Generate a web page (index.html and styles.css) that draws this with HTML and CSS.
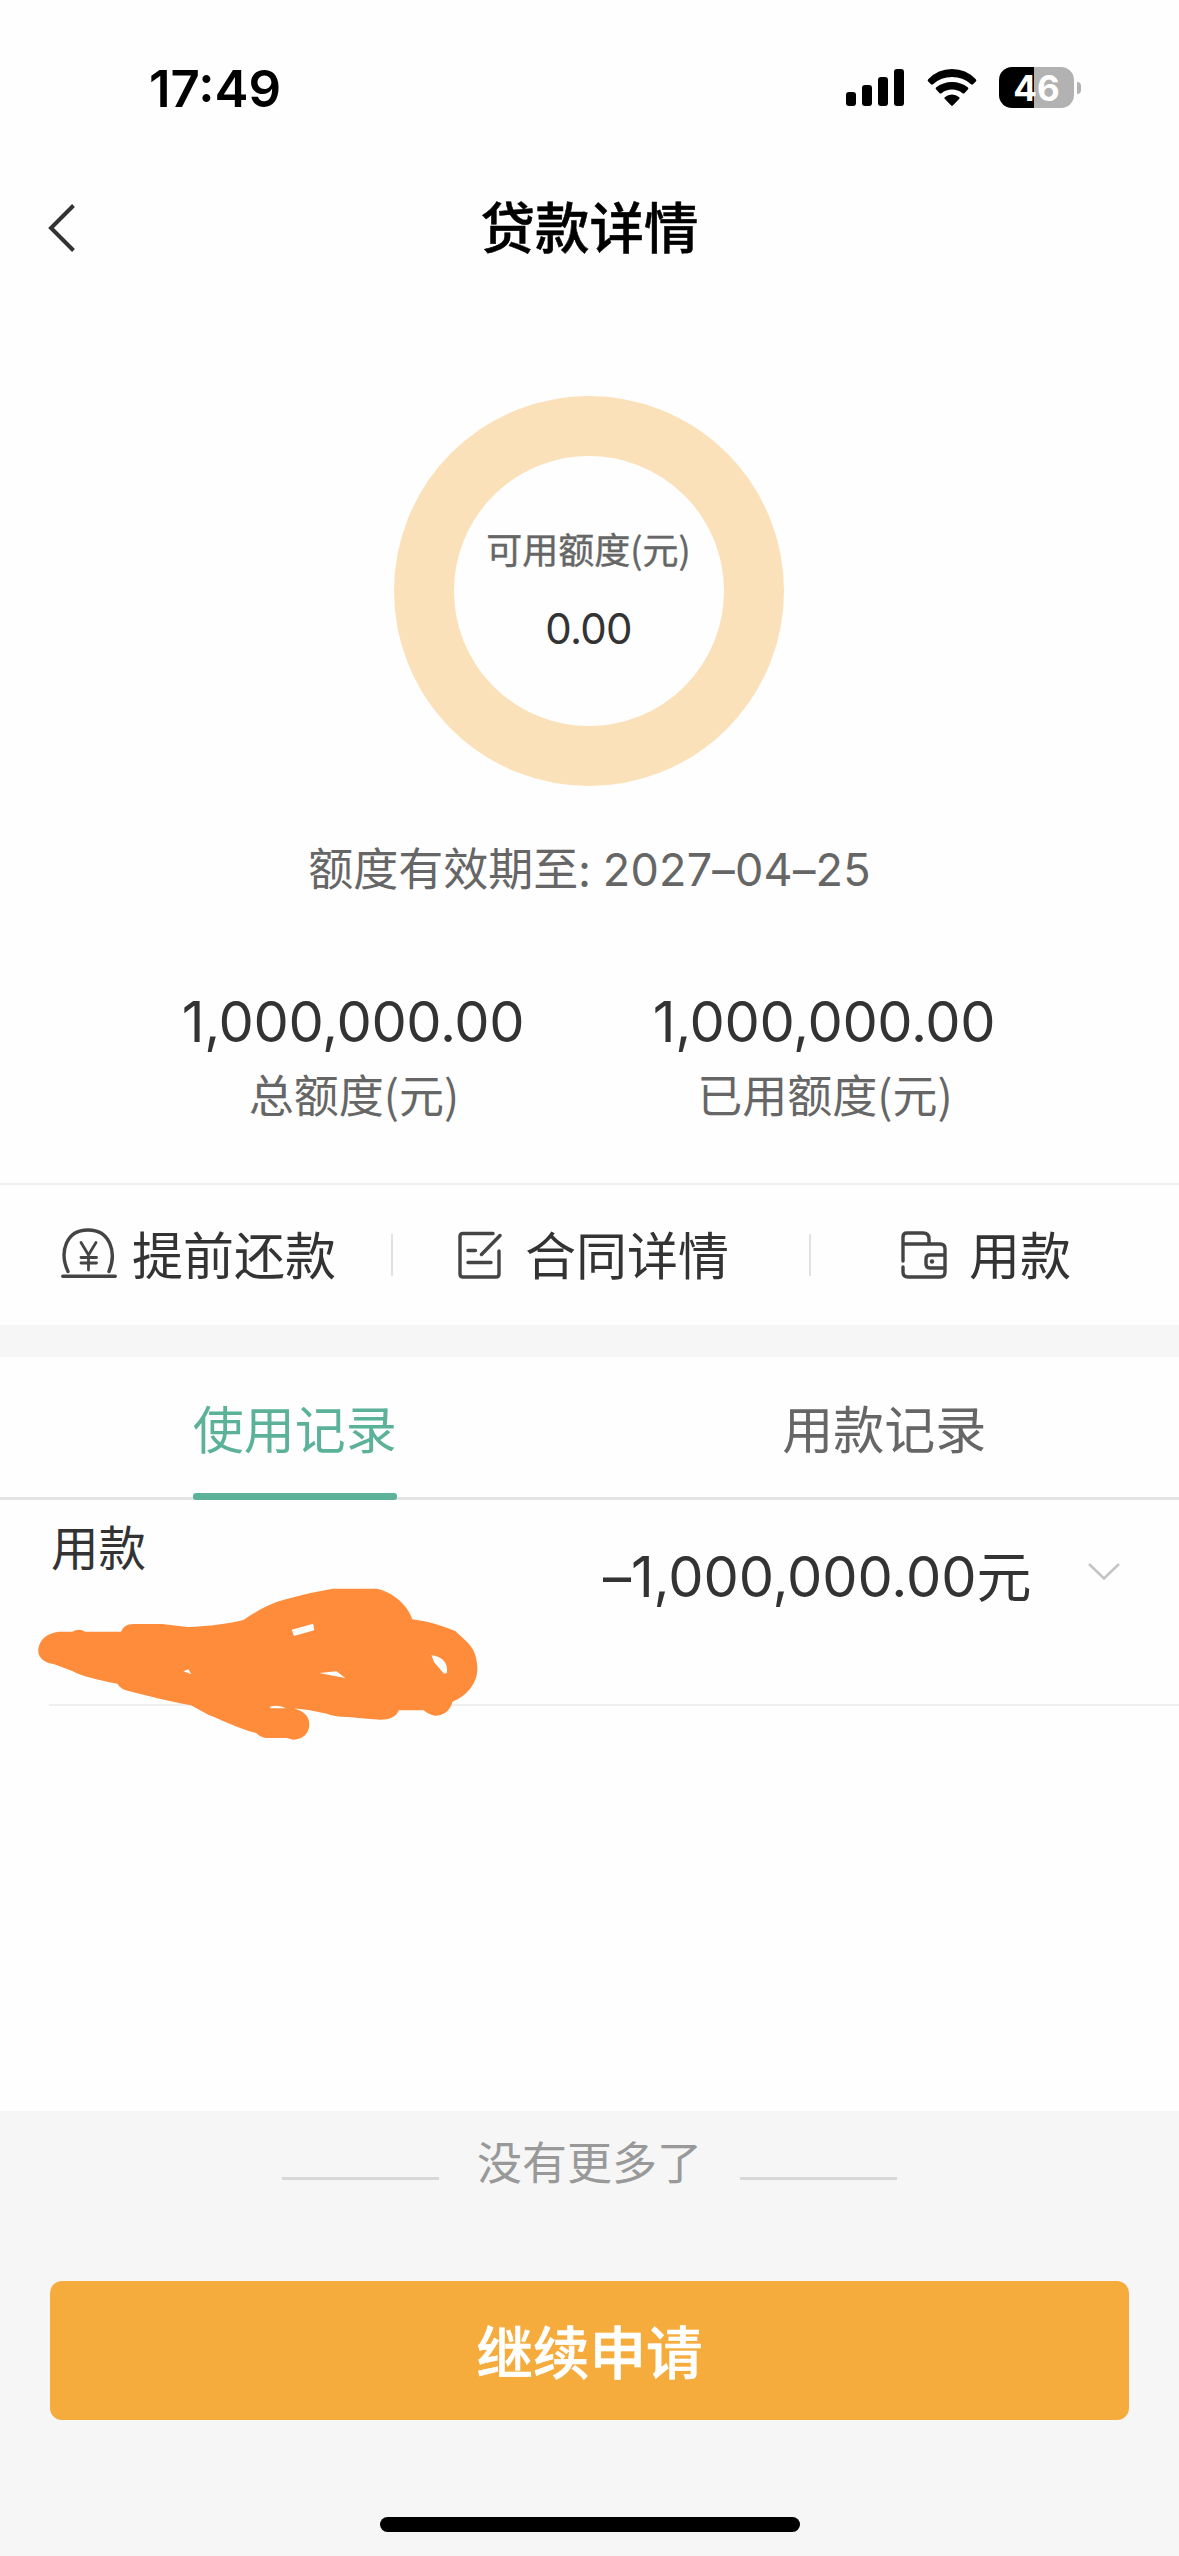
FILE: index.html
```html
<!DOCTYPE html>
<html lang="zh-CN">
<head>
<meta charset="utf-8">
<title>贷款详情</title>
<link rel="stylesheet" href="styles.css">
</head>
<body>
<main class="page">
  <header class="status">
    <span class="time">17:49</span>
    <div class="status-icons">
      <svg class="signal" width="58" height="38" viewBox="0 0 58 38"><rect y="23" width="10" height="14" rx="3"/><rect x="16" y="16" width="10" height="21" rx="3"/><rect x="32" y="8" width="10" height="29" rx="3"/><rect x="48" y="0" width="10" height="37" rx="3"/></svg>
      <svg class="wifi" width="50" height="38" viewBox="0 0 50 38"><path d="M1.2 10.2Q0 11.4 1.2 12.6L4 15.3Q5 16 6 15.2Q14 8 25 8T44 15.2Q45 16 46 15.3L48.800 12.600Q50 11.400 48.800 10.200Q39 0 25 0T1.200 10.200Z"/><path d="M9 18.500Q8.200 19.400 9 20.300L12.600 24.200Q13.500 25 14.500 24.200Q19 20.500 25 20.500T35.500 24.200Q36.500 25 37.400 24.200L41 20.300Q41.800 19.400 41 18.500Q34 13 25 13T9 18.500Z"/><path d="M17.700 28.200Q17 29.200 17.900 30.100L24.200 36.500Q25 37.300 25.800 36.500L32.100 30.100Q33 29.200 32.300 28.200Q29 25.500 25 25.500T17.700 28.200Z"/></svg>
      <div class="battery"><span class="battery-body">46</span><span class="battery-cap"></span></div>
    </div>
  </header>

  <nav class="nav">
    <svg class="back" width="28" height="48" viewBox="0 0 28 48"><path d="M25.500 1.500L3 24L25.500 46.500"/></svg>
    <h1 class="title">贷款详情</h1>
  </nav>

  <section class="summary">
    <div class="ring">
      <span class="ring-label">可用额度(元)</span>
      <span class="ring-value">0.00</span>
    </div>
    <p class="expiry">额度有效期至: <span class="date">2027–04–25</span></p>
    <div class="totals">
      <div class="total"><span class="amount">1,000,000.00</span><span class="label">总额度(元)</span></div>
      <div class="total"><span class="amount">1,000,000.00</span><span class="label">已用额度(元)</span></div>
    </div>
  </section>

  <section class="actions">
    <div class="action repay">
      <svg width="56" height="50" viewBox="0 0 56 50"><path d="M7 43.500C-2 24 5 2 27 2S56 24 48 43.500"/><path d="M1.800 48.300H54.200"/><path class="yen" d="M20 14.500L27.500 27L35 14.500M27.500 27V42M20 29.500H35.500M20 35H35.500"/></svg>
      <span>提前还款</span>
    </div>
    <div class="action contract">
      <svg width="44" height="48" viewBox="0 0 44 48"><path d="M35 2.500H5Q2 2.500 2 5.500V43Q2 46 5 46H38Q41 46 41 43V20M42 4.500L23.500 23.500M10 19.500H17.500M10 31.500H33"/></svg>
      <span>合同详情</span>
    </div>
    <div class="action withdraw">
      <svg width="46" height="50" viewBox="0 0 46 50"><path d="M2 31V7Q2 3 6 3H22Q28 3 28 9V14M2 14H39Q44 14 44 19V42Q44 47 39 47H7Q2 47 2 42V37M44 25H29Q25 25 25 29V34Q25 38 29 38H44"/><circle cx="31" cy="31.500" r="2.200"/></svg>
      <span>用款</span>
    </div>
  </section>

  <section class="records">
    <div class="tabs">
      <div class="tab active"><span>使用记录</span></div>
      <div class="tab"><span>用款记录</span></div>
    </div>
    <div class="record">
      <span class="record-name">用款</span>
      <span class="record-amount"><span class="num">–1,000,000.00</span>元</span>
      <svg class="expand" width="32" height="18" viewBox="0 0 32 18"><path d="M1 1L16 15.500L31 1"/></svg>
      <svg class="redaction" viewBox="90 640 1170 480" preserveAspectRatio="none"><path fill-rule="evenodd" d="M101 840C104 808 125 790 155 786H190Q207 774 224 786H317Q324 764 350 763H425L490 772C550 769 600 762 638 750C680 718 710 700 750 688Q810 668 870 657H985C1030 668 1068 710 1078 749C1120 755 1160 770 1190 784C1215 810 1237 830 1243 858C1252 900 1249 925 1230 956Q1210 985 1183 996C1176 1025 1158 1038 1137 1038Q1118 1034 1108 1022H1043C1035 1045 1015 1050 995 1050L960 1047L910 1042Q870 1040 855 1032Q810 1020 768 1016C795 1024 809 1040 809 1064C809 1090 793 1110 767 1110L750 1105H695Q680 1102 670 1090C620 1075 570 1045 545 1035L500 1007C440 995 390 980 330 962Q314 955 308 942C260 932 215 920 190 904L143 884Q100 875 101 840ZM763 780L819 762L822 782L769 799ZM835 910L880 905L903 925L875 919ZM1128 857C1155 860 1173 880 1168 910L1161 912L1135 878ZM480 905L493 899L501 914ZM706 1011Q730 1003 748 1016H708Z"/></svg>
    </div>
  </section>

  <footer class="footer">
    <div class="end"><i></i><span>没有更多了</span><i></i></div>
    <button class="apply" type="button">继续申请</button>
    <div class="home"></div>
  </footer>
</main>
</body>
</html>
```
FILE: styles.css
```css
* { box-sizing: border-box; }
body { margin: 0; background: #fefefe; color: #333; font-family: "Noto Sans CJK SC", sans-serif; }
svg { display: block; flex: none; }
.page { width: 1179px; height: 2556px; display: flex; flex-direction: column; overflow: hidden; }

.status { height: 168px; flex: none; padding: 67px 98px 0 149px; display: flex; justify-content: space-between; align-items: flex-start; color: #000; }
.time { font: 600 51px/43px Inter, sans-serif; letter-spacing: 0; }
.status-icons { display: flex; align-items: flex-start; }
.signal, .wifi { margin-top: 2px; }
.wifi { margin: 2px 22px 0 23px; }
.battery { display: flex; align-items: center; gap: 3px; }
.battery-body { width: 75px; height: 41px; border-radius: 13px; background: linear-gradient(90deg, #000 35px, #b2b2b2 35px); color: #fff; font: 700 35px/42px Inter, sans-serif; text-align: center; }
.battery-cap { width: 4px; height: 12px; border-radius: 0 4px 4px 0; background: #b2b2b2; }

.nav { height: 120px; flex: none; display: grid; grid-template-columns: 140px 1fr 140px; align-items: center; }
.back { margin-left: 48px; fill: none; stroke: #333; stroke-width: 4; }
.title { margin: 0; padding-bottom: 7px; color: #000; font-size: 54.500px; line-height: 80px; font-weight: 500; text-align: center; -webkit-text-stroke: 0.500px #000; }

.summary { height: 897px; flex: none; padding-top: 108px; display: flex; flex-direction: column; align-items: center; border-bottom: 2px solid #f0f0f0; }
.ring { width: 390px; height: 390px; flex: none; margin-right: 2px; border: 60px solid #fbe1b9; border-radius: 50%; display: flex; flex-direction: column; align-items: center; padding-top: 66px; }
.ring-label { font-size: 36px; line-height: 52px; color: #666; -webkit-text-stroke: 0.400px #666; }
.ring-value { margin-top: 29px; font: 400 42px/52px Inter, sans-serif; letter-spacing: -0.800px; }
.expiry { margin: 49px 0 0; font-size: 45px; line-height: 64px; color: #666; white-space: nowrap; }
.date { font-family: Inter, sans-serif; margin-left: 2px; letter-spacing: 0.2px; }
.totals { width: 942px; margin-top: 88px; display: grid; grid-template-columns: 1fr 1fr; }
.total { display: flex; flex-direction: column; align-items: center; }
.amount { font: 400 56px/64px Inter, sans-serif; letter-spacing: -0.350px; margin-right: 2px; }
.label { margin-top: 8px; font-size: 45px; line-height: 64px; color: #666; }

.actions { height: 140px; flex: none; display: grid; grid-template-columns: 393px 418px 1fr; font-size: 51px; line-height: 60px; }
.action { display: flex; align-items: center; position: relative; }
.action span { padding-bottom: 4px; }
.action + .action::before { content: ""; position: absolute; left: -2px; top: 49px; width: 2px; height: 42px; background: #e2e2e2; }
.action svg { fill: none; stroke: #444; stroke-width: 3.400; stroke-linecap: round; }
.action .yen { stroke-width: 2.800; }
.action circle { fill: #444; stroke: none; }
.repay { padding-left: 61px; gap: 15px; }
.repay svg { margin-bottom: 4px; }
.contract { padding-left: 65px; gap: 23px; }
.withdraw { padding-left: 90px; gap: 22px; }

.records { height: 786px; flex: none; border-top: 32px solid #f6f6f6; }
.tabs { height: 143px; display: grid; grid-template-columns: 1fr 1fr; border-bottom: 3px solid #e3e3e3; font-size: 51px; line-height: 141px; color: #666; text-align: center; }
.tab span { display: inline-block; height: 143px; }
.tab.active { color: #5cb199; }
.tab.active span::after { content: ""; display: block; height: 7px; margin-top: -5px; border-radius: 3px; background: #5cb199; }
.record { height: 206px; margin-left: 49px; display: flex; position: relative; border-bottom: 2px solid #efefef; }
.record-name { width: 554px; padding: 18px 0 0 2px; font-size: 47.500px; line-height: 56px; }
.record-amount { width: 485px; padding-top: 37px; font-size: 55px; line-height: 72px; white-space: nowrap; }
.record-amount .num { font-family: Inter, sans-serif; font-size: 56px; letter-spacing: -0.1px; }
.expand { margin-top: 63px; fill: none; stroke: #c4c4c4; stroke-width: 2.500; }
.redaction { position: absolute; left: -15px; top: 83px; width: 448px; height: 160px; fill: #ff8c3a; }

.footer { flex: 1; display: flex; flex-direction: column; align-items: center; background: #f6f6f6; }
.end { margin-top: 18px; height: 65px; display: flex; justify-content: center; gap: 38px; font-size: 45px; line-height: 64px; color: #999; }
.end i { width: 157px; height: 3px; margin-top: 48px; background: #d8d8d8; }
.apply { width: 1079px; height: 139px; margin-top: 87px; padding: 0 0 4px; border: 0; border-radius: 12px; background: #f5ac3d; color: #fff; font: 500 56.500px/80px "Noto Sans CJK SC", sans-serif; -webkit-text-stroke: 0.600px #fff; }
.home { width: 420px; height: 15px; margin-top: 97px; border-radius: 8px; background: #000; }
```
